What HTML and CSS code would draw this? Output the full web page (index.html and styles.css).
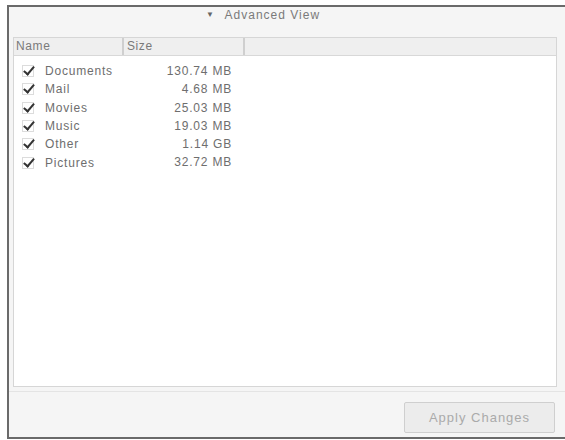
FILE: index.html
```html
<!DOCTYPE html>
<html lang="en">
  <head>
    <meta charset="UTF-8" />
    <title>Advanced View</title>
    <link rel="stylesheet" href="styles.css">
  </head>
  <body>
    <div class="frame">
      <div class="toggle"><span class="arrow">&#9660;</span> Advanced View</div>

      <div class="list">
        <div class="list-head">
          <div class="col-name">Name</div>
          <div class="col-size">Size</div>
          <div class="col-rest"></div>
        </div>

        <div class="row">
          <div class="col-name"><span class="check"></span>Documents</div>
          <div class="col-size">130.74 MB</div>
        </div>
        <div class="row">
          <div class="col-name"><span class="check"></span>Mail</div>
          <div class="col-size">4.68 MB</div>
        </div>
        <div class="row">
          <div class="col-name"><span class="check"></span>Movies</div>
          <div class="col-size">25.03 MB</div>
        </div>
        <div class="row">
          <div class="col-name"><span class="check"></span>Music</div>
          <div class="col-size">19.03 MB</div>
        </div>
        <div class="row">
          <div class="col-name"><span class="check"></span>Other</div>
          <div class="col-size">1.14 GB</div>
        </div>
        <div class="row">
          <div class="col-name"><span class="check"></span>Pictures</div>
          <div class="col-size">32.72 MB</div>
        </div>
      </div>

      <div class="footer">
        <button class="apply-button" disabled>Apply Changes</button>
      </div>
    </div>
  </body>
</html>
```

FILE: styles.css
```css
body {
  margin: 0;
  background-color: white;
  font-family: "Liberation Sans", Arial, sans-serif;
  font-size: 12px;
  letter-spacing: 0.8px;
  color: #6e6e6e;
}

.frame {
  margin: 5px 0 0 7px;
  height: 430px;
  border: 2px solid #6a6a6a;
  border-right: none;
  background-color: #f5f5f5;
  display: flex;
  flex-direction: column;
}

.toggle {
  height: 30px;
  line-height: 14px;
  padding: 1px 48px 0 0;
  box-sizing: border-box;
  text-align: center;
  font-size: 12px;
  letter-spacing: 1px;
  color: #7a7a7a;
}

.arrow {
  font-size: 8px;
  color: #666;
  margin-right: 6px;
  vertical-align: 2px;
}

.list {
  margin: 0 8px 0 4px;
  height: 350px;
  background-color: white;
  border: 1px solid #d6d6d6;
  box-sizing: border-box;
}

.list-head {
  display: flex;
  height: 17px;
  background-color: #efefef;
  border-bottom: 1px solid #d8d8d8;
  line-height: 16px;
  color: #7a7a7a;
  letter-spacing: 0.6px;
}

.list-head .col-name,
.list-head .col-size {
  border-right: 2px solid #cfcfcf;
}

.list-head .col-name {
  width: 106px;
  padding-left: 2px;
}

.list-head .col-size {
  width: 116px;
  padding-left: 3px;
}

.row {
  display: flex;
  height: 18.3px;
  line-height: 18px;
}

.list-head + .row {
  margin-top: 6px;
}

.row .col-name {
  width: 120px;
  padding-left: 8px;
  display: flex;
  align-items: center;
}

.row .col-size {
  width: 90px;
  text-align: right;
}

.check {
  width: 10px;
  height: 10px;
  margin-right: 11px;
  border: 1px solid #dcdcdc;
  position: relative;
}

.check::after {
  content: "";
  position: absolute;
  left: 3px;
  top: -2px;
  width: 4px;
  height: 9px;
  border: solid #333;
  border-width: 0 2px 2px 0;
  transform: rotate(40deg);
}

.footer {
  flex: 1;
  display: flex;
  justify-content: flex-end;
  align-items: flex-end;
  padding: 0 10px 4px 0;
  border-top: 1px solid #e4e4e4;
  margin-top: 4px;
}

.apply-button {
  width: 151px;
  height: 31px;
  font-family: "Liberation Sans", Arial, sans-serif;
  font-size: 13px;
  letter-spacing: 1px;
  color: #aaa;
  background-color: #ececec;
  border: 1px solid #cfcfcf;
  border-radius: 2px;
}
```
